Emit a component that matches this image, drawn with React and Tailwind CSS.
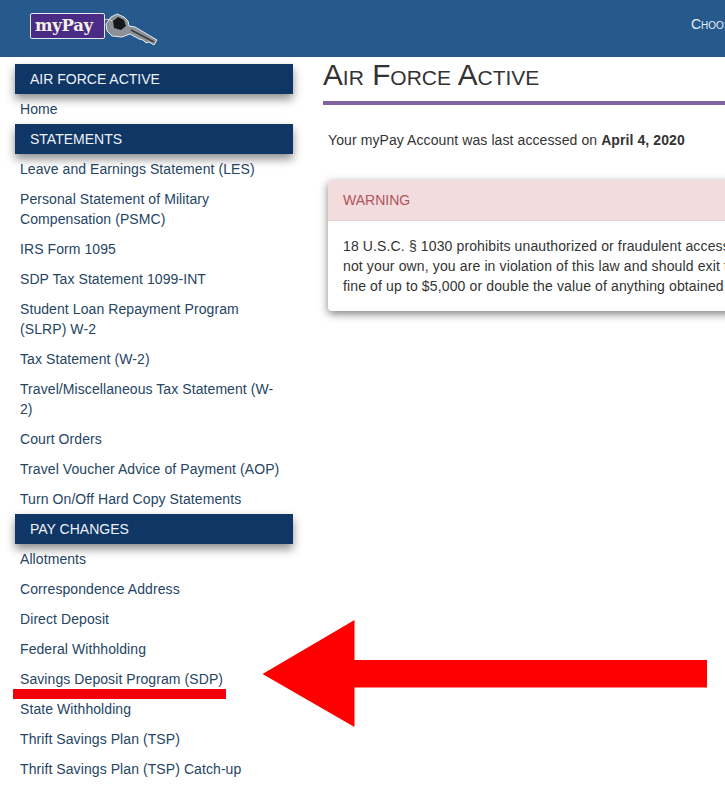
import React from "react";

const statements = [
  "Leave and Earnings Statement (LES)",
  "Personal Statement of Military Compensation (PSMC)",
  "IRS Form 1095",
  "SDP Tax Statement 1099-INT",
  "Student Loan Repayment Program (SLRP) W-2",
  "Tax Statement (W-2)",
  "Travel/Miscellaneous Tax Statement (W-2)",
  "Court Orders",
  "Travel Voucher Advice of Payment (AOP)",
  "Turn On/Off Hard Copy Statements",
];

const payChanges = [
  "Allotments",
  "Correspondence Address",
  "Direct Deposit",
  "Federal Withholding",
  "Savings Deposit Program (SDP)",
  "State Withholding",
  "Thrift Savings Plan (TSP)",
  "Thrift Savings Plan (TSP) Catch-up",
];

function SectionBar({ children }) {
  return (
    <div className="relative z-10 h-[30px] bg-[#0f3665] pl-[15px] text-[14px] leading-[30px] text-[#eef2f7] shadow-[0_5px_9px_rgba(0,0,0,0.45)]">
      {children}
    </div>
  );
}

function NavItem({ children }) {
  return (
    <a className="block py-[5px] pl-[5px] pr-[12px] text-[14px] leading-[20px] tracking-[0.08px] text-[#264563]" href="#">
      {children}
    </a>
  );
}

function Logo() {
  return (
    <div className="relative flex items-start">
      <div className="z-10 flex h-[26px] w-[75px] items-center justify-center rounded-[2px] border border-[#e8e6f0] bg-[#4a2c86] pr-[7px] font-['DejaVu_Serif',serif] text-[16.5px] leading-none font-bold tracking-[-0.3px] text-[#f4f1e4]">
        myPay
      </div>
      <svg className="-ml-[3px] -mt-[1px]" width="56" height="36" viewBox="0 0 56 36">
        <path d="M4 12 L9 5 L15 2 L22 5 L26 9 L27 14 L33 15 L55 28 L52 33 L47 30 L44 31 L41 28 L37 27 L28 22 L20 25 L10 24 L5 19 Z" fill="#8c9197" stroke="#e6e8ea" strokeWidth="1" />
        <path d="M11 9 L16 5 L22 8 L24 14 L19 18 L12 16 Z" fill="#17181a" />
        <path d="M29 18 L52 30" stroke="#3b3e42" strokeWidth="1.5" fill="none" />
        <path d="M0 10 Q5 5 10 9" stroke="#d5d7da" strokeWidth="1" fill="none" />
      </svg>
    </div>
  );
}

export default function App() {
  return (
    <div className="relative h-[791px] w-[725px] overflow-hidden bg-white font-['Liberation_Sans',sans-serif]">
      <header className="flex h-[57px] items-start justify-between bg-[#265a8d]">
        <div className="ml-[30px] mt-[13px]">
          <Logo />
        </div>
        <div className="mt-[14px] w-[34px] overflow-hidden whitespace-nowrap text-[14px] leading-[20px] text-[#e6edf4] [font-variant:small-caps]">
          Choose
        </div>
      </header>

      <div className="flex">
        <aside className="ml-[15px] mt-[7px] w-[278px] shrink-0">
          <SectionBar>AIR FORCE ACTIVE</SectionBar>
          <NavItem>Home</NavItem>
          <SectionBar>STATEMENTS</SectionBar>
          {statements.map((s) => (
            <NavItem key={s}>{s}</NavItem>
          ))}
          <SectionBar>PAY CHANGES</SectionBar>
          {payChanges.map((s) => (
            <NavItem key={s}>{s}</NavItem>
          ))}
        </aside>

        <main className="ml-[30px] min-w-0 flex-1">
          <h1 className="box-content h-[44px] border-b-4 border-[#8064a2] text-[29.8px] leading-[36px] font-normal text-[#333] [font-variant:small-caps]">
            Air Force Active
          </h1>
          <p className="ml-[5px] mt-[25px] text-[14px] leading-[20px] tracking-[0.09px] text-[#333]">
            Your myPay Account was last accessed on <b>April 4, 2020</b>
          </p>
          <div className="ml-[5px] mt-[30px] w-[600px] rounded-[4px] bg-white shadow-[0_3px_9px_rgba(0,0,0,0.5)]">
            <div className="h-[41px] rounded-t-[4px] border-b border-[#ebd5d8] bg-[#f2dcde] px-[15px] text-[14px] leading-[40px] text-[#b0555a]">
              WARNING
            </div>
            <div className="whitespace-nowrap px-[15px] py-[15px] text-[14px] leading-[20px] tracking-[0.13px] text-[#333]">
              18 U.S.C. § 1030 prohibits unauthorized or fraudulent access to
              <br />
              not your own, you are in violation of this law and should exit this
              <br />
              fine of up to $5,000 or double the value of anything obtained
            </div>
          </div>
        </main>
      </div>

      {/* annotation drawn on top of the screenshot */}
      <div className="absolute left-[13px] top-[689px] h-[10px] w-[213px] bg-[#f40008]" />
      <svg className="absolute left-[262px] top-[620px]" width="446" height="107" viewBox="0 0 446 107">
        <path d="M0.5 54 L92.5 0 L92.5 40 L445 40 L445 67.5 L92.5 67.5 L92.5 107 Z" fill="#ff0000" />
      </svg>
    </div>
  );
}
